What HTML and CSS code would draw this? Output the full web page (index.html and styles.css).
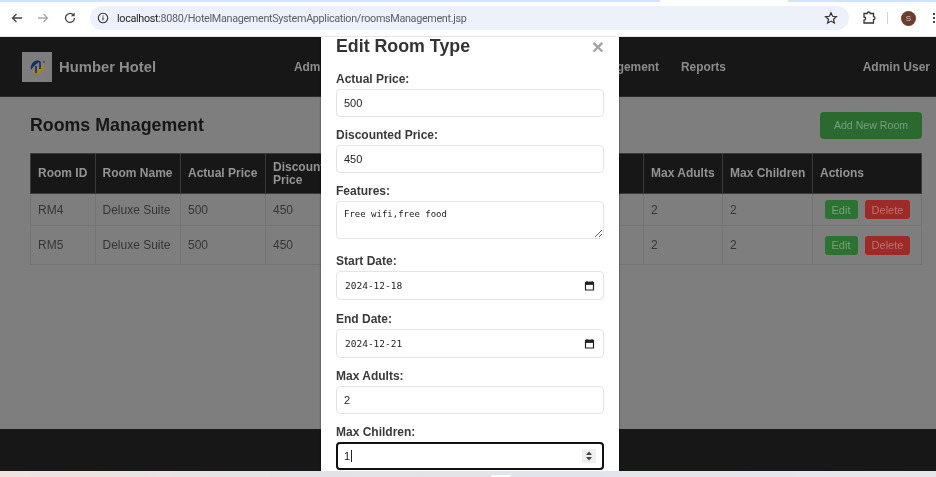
FILE: index.html
```html
<!DOCTYPE html>
<html lang="en">
<head>
<meta charset="utf-8">
<title>Rooms Management</title>
<link rel="stylesheet" href="styles.css">
</head>
<body>
<div class="screen">
  <div class="tabstrip"><span class="tab-left"></span><span class="tab-active"></span><span class="tab-right"></span></div>
  <div class="toolbar">
    <svg class="ico ico-back" viewBox="0 0 14 14"><path d="M12 7H2.500M6.500 3 2.500 7l4 4" fill="none" stroke="#444" stroke-width="1.300"/></svg>
    <svg class="ico" viewBox="0 0 14 14"><path d="M2 7h9.500M7.500 3l4 4-4 4" fill="none" stroke="#a9a9a9" stroke-width="1.300"/></svg>
    <svg class="ico" viewBox="0 0 14 14"><path d="M11.500 7A4.500 4.500 0 1 1 10 3.600" fill="none" stroke="#444" stroke-width="1.300"/><path d="M11.700 1.500v3.800H7.900z" fill="#444"/></svg>
    <div class="omnibox">
      <svg class="info" viewBox="0 0 12 12"><circle cx="6" cy="6" r="4.700" fill="none" stroke="#333" stroke-width="1.100"/><path d="M6 5.300v3M6 3.400v1" stroke="#333" stroke-width="1.100"/></svg>
      <span class="url"><span class="host">localhost</span>:8080/HotelManagementSystemApplication/roomsManagement.jsp</span>
      <svg class="star" viewBox="0 0 14 14"><path d="m7 1.800 1.600 3.500 3.800.4-2.900 2.500.9 3.800L7 10.100 3.600 12l.9-3.800-2.900-2.500 3.800-.4z" fill="none" stroke="#333" stroke-width="1.200"/></svg>
    </div>
    <svg class="puzzle" viewBox="0 0 16 16"><path d="M3 3.500h3.200a1.500 1.500 0 0 1 3 0h3.300v3.200a1.500 1.500 0 0 1 0 3v3.300H3v-2.800a1.500 1.500 0 0 0 0-3.200z" fill="none" stroke="#333" stroke-width="1.300"/></svg>
    <span class="sep"></span>
    <span class="avatar">S</span>
    <span class="dots"></span>
  </div>
  <div class="app">
    <header class="site-header">
      <div class="brand">
        <span class="logo">
          <svg viewBox="0 0 30 30" width="30" height="30"><path d="M9 18c-1-5 2-9 6-9.500 2-.2 3 .3 4 1-3 .5-7 4-10 8.500z" fill="#0e2f5e"/><path d="M10 19c4 0 8-3 12-7 .5 5-2 10-7 10-2 0-4-1-5-3z" fill="#a5851f"/><path d="M14 14v7M18 10v7" stroke="#0e2f5e" stroke-width="1.600"/><circle cx="22" cy="10" r=".8" fill="#222"/></svg>
        </span>
        <span class="brand-name">Humber Hotel</span>
      </div>
      <nav class="nav">
        <a class="nav-admin">Admin Dashboard</a>
        <a class="nav-mgmt">Room Management</a>
        <a>Reports</a>
      </nav>
      <span class="user">Admin User</span>
    </header>
    <main class="content">
      <div class="title-row">
        <h1>Rooms Management</h1>
        <button class="add-btn">Add New Room</button>
      </div>
      <table class="rooms">
        <colgroup>
          <col class="c-id"><col class="c-name"><col class="c-price"><col class="c-disc"><col class="c-feat"><col class="c-start"><col class="c-end"><col class="c-adults"><col class="c-child"><col>
        </colgroup>
        <thead>
          <tr><th>Room ID</th><th>Room Name</th><th>Actual Price</th><th class="wrap">Discounted Price</th><th>Features</th><th>Start Date</th><th>End Date</th><th>Max Adults</th><th>Max Children</th><th>Actions</th></tr>
        </thead>
        <tbody>
          <tr><td>RM4</td><td>Deluxe Suite</td><td>500</td><td>450</td><td>Free wifi</td><td>2024-12-18</td><td>2024-12-21</td><td>2</td><td>2</td><td class="actions"><button class="edit">Edit</button><button class="del">Delete</button></td></tr>
          <tr><td>RM5</td><td>Deluxe Suite</td><td>500</td><td>450</td><td>Free wifi</td><td>2024-12-25</td><td>2024-12-28</td><td>2</td><td>2</td><td class="actions"><button class="edit">Edit</button><button class="del">Delete</button></td></tr>
        </tbody>
      </table>
    </main>
    <footer class="site-footer"></footer>
    <div class="modal">
      <div class="modal-head"><h2>Edit Room Type</h2><span class="close">&times;</span></div>
      <label class="f-label">Actual Price:</label>
      <input class="f-input" type="text" value="500">
      <label class="f-label">Discounted Price:</label>
      <input class="f-input" type="text" value="450">
      <label class="f-label">Features:</label>
      <textarea class="f-input f-area">Free wifi,free food</textarea>
      <label class="f-label">Start Date:</label>
      <div class="f-input f-date"><span>2024-12-18</span><svg class="cal" viewBox="0 0 11 11"><path d="M1.500 2.500h8v7.500h-8z" fill="none" stroke="#222" stroke-width="1.200"/><path d="M1.500 2h8v2.500h-8zM3 .8v2M8 .8v2" fill="#222" stroke="#222" stroke-width=".8"/></svg></div>
      <label class="f-label">End Date:</label>
      <div class="f-input f-date f-date-end"><span>2024-12-21</span><svg class="cal" viewBox="0 0 11 11"><path d="M1.500 2.500h8v7.500h-8z" fill="none" stroke="#222" stroke-width="1.200"/><path d="M1.500 2h8v2.500h-8zM3 .8v2M8 .8v2" fill="#222" stroke="#222" stroke-width=".8"/></svg></div>
      <label class="f-label">Max Adults:</label>
      <input class="f-input" type="text" value="2">
      <label class="f-label">Max Children:</label>
      <div class="f-input f-focus"><span>1</span><span class="caret"></span><span class="spin"><svg viewBox="0 0 8 12" width="8" height="12"><path d="M4 1.500 7 5H1zM4 10.500 1 7h6z" fill="#444"/></svg></span></div>
    </div>
  </div>
  <div class="taskbar"><span class="task-item"></span></div>
</div>
</body>
</html>
```
FILE: styles.css
```css
* { box-sizing: border-box; }
html, body { margin: 0; height: 100%; overflow: hidden; }
body { font-family: "Liberation Sans", Arial, sans-serif; background: #fff; }
.screen { width: 936px; height: 477px; display: flex; flex-direction: column; overflow: hidden; filter: blur(.35px); }

.tabstrip { height: 2px; display: flex; background: #fff; flex: none; }
.tab-left { width: 660px; background: #d3e3fd; }
.tab-active { width: 128px; background: #fff; }
.tab-right { flex: 1; background: #d3e3fd; }
.toolbar { height: 35px; flex: none; display: flex; align-items: center; padding: 0 0 2px 10px; background: #fff; border-bottom: 1px solid #e6e6e6; }
.ico { width: 14px; height: 14px; margin-right: 13px; flex: none; }
.ico-back { margin-right: 12px; }
.omnibox { width: 759px; height: 24px; border-radius: 12px; background: #ecf1fa; display: flex; align-items: center; padding: 0 11px 0 7px; flex: none; }
.info { width: 12px; height: 12px; margin-right: 8px; flex: none; }
.url { font-family: Roboto, "Liberation Sans", sans-serif; font-size: 10.800px; letter-spacing: -.32px; color: #5b5e63; flex: 1; white-space: nowrap; }
.host { color: #1f1f1f; }
.star { width: 14px; height: 14px; flex: none; }
.puzzle { width: 16px; height: 16px; margin-left: 12px; flex: none; }
.sep { width: 1px; height: 12px; background: #c9d6ec; margin-left: 10px; flex: none; }
.avatar { width: 15px; height: 15px; border-radius: 50%; background: #6a3d2e; color: #d8c9c2; font-size: 8px; display: flex; align-items: center; justify-content: center; margin-left: 13px; flex: none; }
.dots { width: 2px; height: 10px; margin-left: 17px; flex: none; background: repeating-linear-gradient(#444 0 2px, transparent 2px 4px); }

.app { position: relative; flex: 1; display: flex; flex-direction: column; background: #7e7e7e; overflow: hidden; min-height: 0; }

.site-header { height: 60px; flex: none; background: #171717; display: flex; align-items: center; padding: 0 6px 0 22px; color: #8c8c8c; font-weight: 700; border-bottom: 1px solid #2a2a2a; }
.brand { display: flex; align-items: center; gap: 7px; width: 272px; flex: none; }
.logo { width: 30px; height: 30px; background: #7d7d7d; display: block; flex: none; }
.logo svg { display: block; }
.brand-name { font-size: 14.800px; }
.nav { display: flex; font-size: 11.900px; white-space: nowrap; }
.nav a { display: block; }
.nav-admin { width: 218px; }
.nav-mgmt { width: 169px; padding-right: 22px; text-align: right; }
.user { margin-left: auto; font-size: 12px; }

.content { flex: 1; padding: 0 14px 0 30px; min-height: 0; }
.title-row { display: flex; justify-content: space-between; align-items: center; height: 56px; }
h1 { margin: 0; font-size: 17.800px; color: #161616; font-weight: 700; }
.add-btn { width: 102px; height: 27px; border: 0; border-radius: 4px; background: #2b6a2f; color: #7c9c7f; font: 10.600px "Liberation Sans", sans-serif; padding: 0; }
.rooms { width: 892px; table-layout: fixed; border-collapse: collapse; font-size: 12px; }
.c-id { width: 64.500px; }
.c-name { width: 85.500px; }
.c-price { width: 85px; }
.c-disc { width: 88px; }
.c-feat { width: 100px; }
.c-start { width: 97px; }
.c-end { width: 93px; }
.c-adults { width: 79px; }
.c-child { width: 90px; }
.rooms th { background: #171717; color: #939393; height: 40px; padding: 0 7px; text-align: left; font-size: 12px; line-height: 13px; border: 1px solid #3a3a3a; white-space: nowrap; }
.rooms th.wrap { white-space: normal; }
.rooms td { height: 39px; padding: 0 7px; color: #363636; border: 1px solid #747474; }
.rooms tbody tr:first-child td { height: 32px; }
.rooms td.actions { padding-left: 11.500px; }
.actions button { height: 19px; border: 0; border-radius: 3px; font: 11px "Liberation Sans", sans-serif; padding: 0; vertical-align: middle; }
.edit { width: 33px; background: #2c7231; color: #78a07b; margin-right: 7.500px; }
.del { width: 45px; background: #9c2b27; color: #bd7370; }

.site-footer { height: 42px; flex: none; background: #171717; }

.modal { position: absolute; top: 0; left: 321px; width: 298px; height: 434px; background: #fff; padding: 0 15px; overflow: hidden; display: flex; flex-direction: column; box-shadow: 0 0 2px rgba(0,0,0,.5); }
.modal-head { display: flex; justify-content: space-between; align-items: center; height: 18px; margin-bottom: 16px; flex: none; }
h2 { margin: 0; font-size: 17.800px; line-height: 18px; color: #333; font-weight: 700; }
.close { font-size: 21px; line-height: 18px; font-weight: 700; color: #a3a3a3; margin-top: 2px; }
.f-label { font-size: 12px; line-height: 15px; font-weight: 700; color: #3a3a3a; padding-top: 1px; height: 16px; margin-bottom: 2px; flex: none; }
.f-input { width: 268px; height: 28px; flex: none; border: 1px solid #e4e4e4; border-radius: 4px; background: #fff; padding: 0 7px; font: 11px "Liberation Sans", sans-serif; color: #222; margin-bottom: 10px; outline: 0; }
.f-area { height: 38px; font: 9px/12px "DejaVu Sans Mono", monospace; padding: 6px 7px; margin-bottom: 14px; }
.f-date { height: 29px; font: 9.500px "DejaVu Sans Mono", monospace; margin-bottom: 11px; display: flex; align-items: center; justify-content: space-between; padding-left: 8px; padding-right: 8px; }
.f-date-end { margin-bottom: 10px; }
.cal { width: 11px; height: 11px; flex: none; }
.f-focus { border: 2px solid #111; padding: 0 6px; display: flex; align-items: center; margin-bottom: 0; }
.caret { width: 1px; height: 12px; background: #222; margin-left: 1px; }
.spin { margin-left: auto; width: 14px; height: 14px; background: #efefef; display: flex; align-items: center; justify-content: center; }

.taskbar { height: 6px; flex: none; display: flex; align-items: flex-end; padding-left: 491px; background: linear-gradient(90deg, #f1e2dd 0, #e3e3e6 30%, #e2e4ec 60%, #e6e6ea 100%); }
.task-item { width: 20px; height: 2px; background: #fff; border-radius: 2px 2px 0 0; }
```
